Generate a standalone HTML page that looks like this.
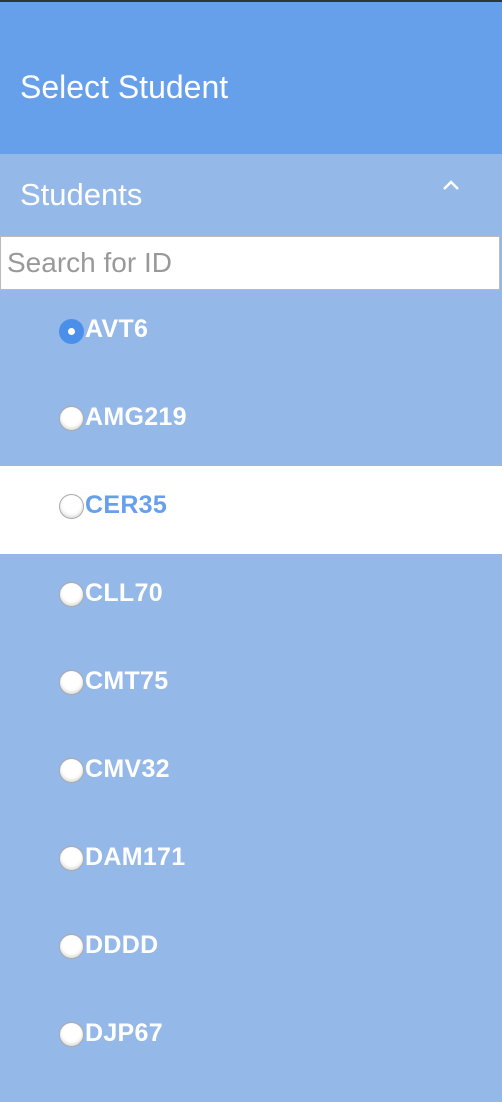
<!DOCTYPE html>
<html><head><style>
*{margin:0;padding:0;box-sizing:border-box}
body{width:502px;height:1102px;overflow:hidden;background:#94b8e8;font-family:"Liberation Sans",sans-serif}
.top{height:2px;background:#333}
.hdr{height:152px;background:#66a0ea;color:#fff;font-size:32px;padding-left:20px;line-height:170px}
.sec{height:82px;position:relative;color:#fff;font-size:31px;padding-left:20px;line-height:82px}
.search{height:54px;width:500px;background:#fff;border:1px solid #bbb;color:#999;font-size:28px;padding-left:6px;line-height:52px}
.row{height:88px;position:relative;color:#fff;font-weight:bold;font-size:25px}
.row.w{background:#fff;color:#66a0ea}
.rd{position:absolute;left:59px;top:28px;width:25px;height:25px;border-radius:50%;background:#fff;border:1px solid #aaa;box-shadow:inset 0 -2px 3px #ddd}
.rd.on{background:#4a90ea;border-color:#4a90ea;box-shadow:none}
.rd.on:after{content:"";position:absolute;left:8px;top:8px;width:7px;height:7px;border-radius:50%;background:#fff}
.t{position:absolute;left:85px;top:25px;letter-spacing:0.3px}
</style></head><body>
<div class="top"></div>
<div class="hdr">Select Student</div>
<div class="sec">Students<svg width="20" height="14" viewBox="0 0 20 14" style="position:absolute;left:441px;top:24px"><path d="M3 11 L10 4 L17 11" stroke="#fff" stroke-width="2.5" fill="none"/></svg></div>
<div class="search">Search for ID</div>
<div class="row"><div class="rd on" style="top:29px"></div><div class="t" style="top:25px">AVT6</div></div>
<div class="row"><div class="rd"></div><div class="t">AMG219</div></div>
<div class="row w"><div class="rd"></div><div class="t">CER35</div></div>
<div class="row"><div class="rd"></div><div class="t">CLL70</div></div>
<div class="row"><div class="rd"></div><div class="t">CMT75</div></div>
<div class="row"><div class="rd"></div><div class="t">CMV32</div></div>
<div class="row"><div class="rd"></div><div class="t">DAM171</div></div>
<div class="row"><div class="rd"></div><div class="t">DDDD</div></div>
<div class="row"><div class="rd"></div><div class="t">DJP67</div></div>
</body></html>
